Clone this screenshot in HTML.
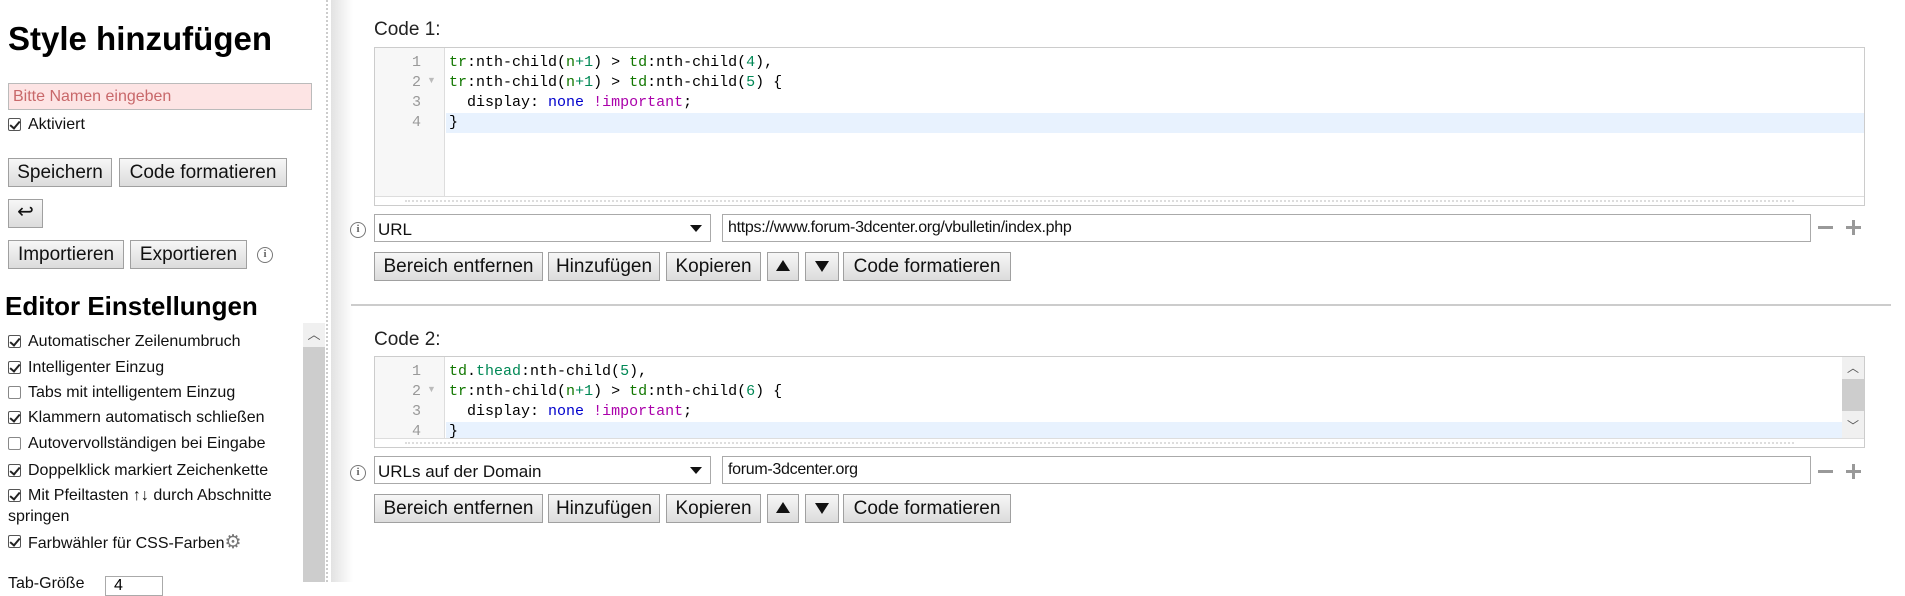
<!DOCTYPE html>
<html><head><meta charset="utf-8">
<style>
*{box-sizing:border-box;margin:0;padding:0}
body{width:1905px;height:582px;overflow:hidden;background:#fff;font-family:"Liberation Sans",Arial,sans-serif;color:#000;position:relative}
.a{position:absolute}
.btn{position:absolute;background:linear-gradient(#f7f7f7,#dcdcdc);border:1px solid #a0a0a0;font-size:19px;line-height:27px;text-align:center;color:#111;white-space:nowrap}
.cb{position:absolute;width:13px;height:13px;border:1px solid #555;border-radius:2px;background:#fff}
.cb.on::after{content:"";position:absolute;left:3px;top:0px;width:4px;height:8px;border:solid #222;border-width:0 2px 2px 0;transform:rotate(40deg)}
.lbl{position:absolute;font-size:16px;line-height:20px;white-space:nowrap;color:#111}
.info{position:absolute;width:16px;height:16px;border:1.5px solid #777;border-radius:50%;color:#666;font:bold 11px/13px "Liberation Serif",serif;text-align:center}
.ed{position:absolute;border:1px solid #ccc;background:#fff;overflow:hidden}
.gut{position:absolute;left:0;top:0;bottom:0;width:70px;background:#f7f7f7;border-right:1px solid #ddd}
.ln{position:absolute;left:0;width:46px;text-align:right;font:15px/20px "Liberation Mono",monospace;color:#999}
.code{position:absolute;left:74px;font:15px/20px "Liberation Mono",monospace;color:#000;white-space:pre}
.hl{position:absolute;left:71px;right:0;height:20px;background:#e8f2fe}
.g{color:#170}.n{color:#164}.b{color:#00c}.p{color:#a0a}.gr{color:#085}
.dot{position:absolute;left:0;right:0;bottom:0;height:9px;border-top:1px solid #ddd;background:#fff}
.dot::after{content:"";position:absolute;left:30px;right:70px;top:3px;border-top:2px dotted #ddd}
.sel{position:absolute;border:1px solid #aaa;background:#fff;font-size:17px;line-height:30px;padding-left:3px;color:#111}
.sel::after{content:"";position:absolute;right:8px;top:10px;border:6px solid transparent;border-top:7px solid #111}
.inp{position:absolute;border:1px solid #aaa;background:#fff;font-size:16px;line-height:25px;padding-left:5px;color:#111;letter-spacing:-0.3px}
.tri{display:inline-block;border:7px solid transparent}
</style></head><body>

<!-- left panel -->
<div class="a" style="left:8px;top:17px;font-size:33px;font-weight:bold;line-height:44px">Style hinzufügen</div>
<div class="a" style="left:8px;top:83px;width:304px;height:27px;background:#fde4e4;border:1px solid #bbb;font-size:16px;line-height:25px;padding-left:4px;color:#c8686a">Bitte Namen eingeben</div>
<div class="cb on" style="left:8px;top:118px"></div><div class="lbl" style="left:28px;top:115px">Aktiviert</div>
<div class="btn" style="left:8px;top:158px;width:104px;height:29px">Speichern</div>
<div class="btn" style="left:119px;top:158px;width:168px;height:29px">Code formatieren</div>
<div class="btn" style="left:8px;top:199px;width:35px;height:29px;font-size:20px;line-height:25px">↩</div>
<div class="btn" style="left:8px;top:240px;width:116px;height:29px">Importieren</div>
<div class="btn" style="left:130px;top:240px;width:117px;height:29px">Exportieren</div>
<div class="info" style="left:257px;top:247px">i</div>
<div class="a" style="left:5px;top:291px;font-size:26px;font-weight:bold;line-height:30px">Editor Einstellungen</div>

<div class="cb on" style="left:8px;top:335px"></div><div class="lbl" style="left:28px;top:332px">Automatischer Zeilenumbruch</div>
<div class="cb on" style="left:8px;top:361px"></div><div class="lbl" style="left:28px;top:358px">Intelligenter Einzug</div>
<div class="cb" style="left:8px;top:386px;border-color:#888"></div><div class="lbl" style="left:28px;top:383px">Tabs mit intelligentem Einzug</div>
<div class="cb on" style="left:8px;top:411px"></div><div class="lbl" style="left:28px;top:408px">Klammern automatisch schließen</div>
<div class="cb" style="left:8px;top:437px;border-color:#888"></div><div class="lbl" style="left:28px;top:434px">Autovervollständigen bei Eingabe</div>
<div class="cb on" style="left:8px;top:464px"></div><div class="lbl" style="left:28px;top:461px">Doppelklick markiert Zeichenkette</div>
<div class="cb on" style="left:8px;top:489px"></div><div class="lbl" style="left:28px;top:486px">Mit Pfeiltasten ↑↓ durch Abschnitte</div>
<div class="lbl" style="left:8px;top:507px">springen</div>
<div class="cb on" style="left:8px;top:535px"></div><div class="lbl" style="left:28px;top:532px">Farbwähler für CSS-Farben<span style="color:#777;font-size:19px;font-family:'DejaVu Sans',sans-serif">⚙</span></div>
<div class="lbl" style="left:8px;top:574px">Tab-Größe</div>
<div class="a" style="left:105px;top:576px;width:58px;height:20px;border:1px solid #aaa;font-size:16px;padding-left:8px">4</div>

<!-- left scrollbar -->
<div class="a" style="left:303px;top:323px;width:22px;height:259px;background:#cdcdcd"></div>
<div class="a" style="left:303px;top:323px;width:22px;height:24px;background:#f0f0f0;text-align:center;font-size:13px;color:#555;line-height:24px">︿</div>
<!-- divider -->
<div class="a" style="left:326px;top:0;width:2px;height:582px;border-left:2px dotted #ccc"></div>
<div class="a" style="left:331px;top:0;width:22px;height:582px;background:linear-gradient(90deg,#e2e2e2,#fff)"></div>

<!-- Code 1 -->
<div class="a" style="left:374px;top:19px;font-size:19px;line-height:22px;color:#222">Code 1:</div>
<div class="ed" style="left:374px;top:47px;width:1491px;height:159px">
  <div class="gut"></div>
  <div class="hl" style="top:65px"></div>
  <div class="ln" style="top:5px">1<br>2<br>3<br>4</div>
  <div class="a" style="left:52px;top:27px;font-size:9px;color:#bbb">▼</div>
  <div class="code" style="top:5px"><span class="g">tr</span>:nth-child(<span class="g">n</span><span class="gr">+1</span>) &gt; <span class="g">td</span>:nth-child(<span class="gr">4</span>),
<span class="g">tr</span>:nth-child(<span class="g">n</span><span class="gr">+1</span>) &gt; <span class="g">td</span>:nth-child(<span class="gr">5</span>) {
  display: <span class="b">none</span> <span class="p">!important</span>;
}</div>
  <div class="dot"></div>
</div>
<div class="info" style="left:350px;top:222px">i</div>
<div class="sel" style="left:374px;top:214px;width:337px;height:28px">URL</div>
<div class="inp" style="left:722px;top:214px;width:1089px;height:28px">https://www.forum-3dcenter.org/vbulletin/index.php</div>
<div class="a" style="left:1818px;top:226px;width:15px;height:3px;background:#999"></div>
<div class="a" style="left:1846px;top:226px;width:15px;height:3px;background:#999"></div>
<div class="a" style="left:1852px;top:220px;width:3px;height:15px;background:#999"></div>
<div class="btn" style="left:374px;top:252px;width:169px;height:29px">Bereich entfernen</div>
<div class="btn" style="left:548px;top:252px;width:112px;height:29px">Hinzufügen</div>
<div class="btn" style="left:666px;top:252px;width:95px;height:29px">Kopieren</div>
<div class="btn" style="left:767px;top:252px;width:32px;height:29px"><span class="tri" style="border-bottom:11px solid #111;border-top:0;vertical-align:1px"></span></div>
<div class="btn" style="left:805px;top:252px;width:34px;height:29px"><span class="tri" style="border-top:11px solid #111;border-bottom:0;vertical-align:0px"></span></div>
<div class="btn" style="left:843px;top:252px;width:168px;height:29px">Code formatieren</div>

<div class="a" style="left:351px;top:304px;width:1540px;height:2px;background:#ccc"></div>

<!-- Code 2 -->
<div class="a" style="left:374px;top:329px;font-size:19px;line-height:22px;color:#222">Code 2:</div>
<div class="ed" style="left:374px;top:356px;width:1491px;height:92px">
  <div class="gut"></div>
  <div class="hl" style="top:65px;right:22px"></div>
  <div class="ln" style="top:5px">1<br>2<br>3<br>4</div>
  <div class="a" style="left:52px;top:27px;font-size:9px;color:#bbb">▼</div>
  <div class="code" style="top:5px"><span class="g">td</span>.<span class="gr">thead</span>:nth-child(<span class="gr">5</span>),
<span class="g">tr</span>:nth-child(<span class="g">n</span><span class="gr">+1</span>) &gt; <span class="g">td</span>:nth-child(<span class="gr">6</span>) {
  display: <span class="b">none</span> <span class="p">!important</span>;
}</div>
  <div class="a" style="right:0;top:0;width:22px;height:82px;background:#f0f0f0"></div>
  <div class="a" style="right:0;top:22px;width:22px;height:32px;background:#cdcdcd"></div>
  <div class="a" style="right:0;top:2px;width:22px;text-align:center;font-size:12px;color:#555">︿</div>
  <div class="a" style="right:0;top:60px;width:22px;text-align:center;font-size:12px;color:#555">﹀</div>
  <div class="dot"></div>
</div>
<div class="info" style="left:350px;top:465px">i</div>
<div class="sel" style="left:374px;top:456px;width:337px;height:28px">URLs auf der Domain</div>
<div class="inp" style="left:722px;top:456px;width:1089px;height:28px">forum-3dcenter.org</div>
<div class="a" style="left:1818px;top:470px;width:15px;height:3px;background:#999"></div>
<div class="a" style="left:1846px;top:470px;width:15px;height:3px;background:#999"></div>
<div class="a" style="left:1852px;top:464px;width:3px;height:15px;background:#999"></div>
<div class="btn" style="left:374px;top:494px;width:169px;height:29px">Bereich entfernen</div>
<div class="btn" style="left:548px;top:494px;width:112px;height:29px">Hinzufügen</div>
<div class="btn" style="left:666px;top:494px;width:95px;height:29px">Kopieren</div>
<div class="btn" style="left:767px;top:494px;width:32px;height:29px"><span class="tri" style="border-bottom:11px solid #111;border-top:0;vertical-align:1px"></span></div>
<div class="btn" style="left:805px;top:494px;width:34px;height:29px"><span class="tri" style="border-top:11px solid #111;border-bottom:0;vertical-align:0px"></span></div>
<div class="btn" style="left:843px;top:494px;width:168px;height:29px">Code formatieren</div>

</body></html>
